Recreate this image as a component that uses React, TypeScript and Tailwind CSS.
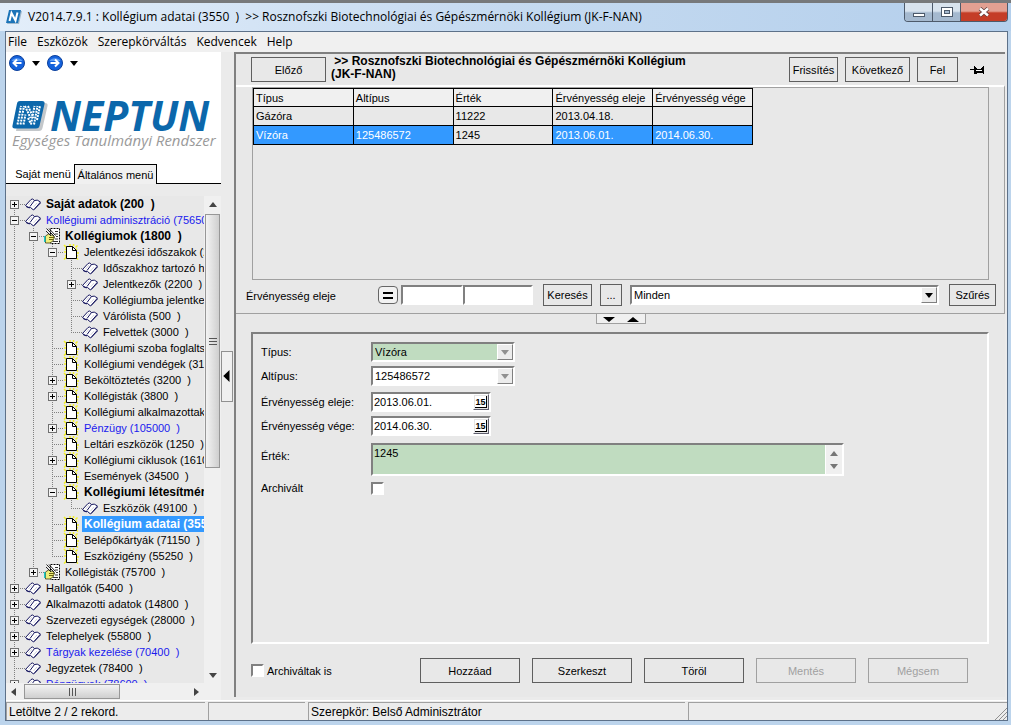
import React, { useState } from 'react';
import clsx from 'clsx';

type IconKind = 'book' | 'page' | 'hand';

interface TreeItem {
  level: number;
  label: string;
  icon: IconKind;
  box?: '+' | '-';
  tone?: 'bold' | 'blue';
}

const TREE: TreeItem[] = [
  { level: 0, label: 'Saját adatok (200  )', icon: 'book', box: '+', tone: 'bold' },
  { level: 0, label: 'Kollégiumi adminisztráció (75650', icon: 'book', box: '-', tone: 'blue' },
  { level: 1, label: 'Kollégiumok (1800  )', icon: 'hand', box: '-', tone: 'bold' },
  { level: 2, label: 'Jelentkezési időszakok (2', icon: 'page', box: '-' },
  { level: 3, label: 'Időszakhoz tartozó ha', icon: 'book' },
  { level: 3, label: 'Jelentkezők (2200  )', icon: 'book', box: '+' },
  { level: 3, label: 'Kollégiumba jelentkez', icon: 'book' },
  { level: 3, label: 'Várólista (500  )', icon: 'book' },
  { level: 3, label: 'Felvettek (3000  )', icon: 'book' },
  { level: 2, label: 'Kollégiumi szoba foglaltsá', icon: 'page' },
  { level: 2, label: 'Kollégiumi vendégek (315', icon: 'page' },
  { level: 2, label: 'Beköltöztetés (3200  )', icon: 'page', box: '+' },
  { level: 2, label: 'Kollégisták (3800  )', icon: 'page', box: '+' },
  { level: 2, label: 'Kollégiumi alkalmazottak (', icon: 'page' },
  { level: 2, label: 'Pénzügy (105000  )', icon: 'page', box: '+', tone: 'blue' },
  { level: 2, label: 'Leltári eszközök (1250  )', icon: 'page' },
  { level: 2, label: 'Kollégiumi ciklusok (1610', icon: 'page', box: '+' },
  { level: 2, label: 'Események (34500  )', icon: 'page' },
  { level: 2, label: 'Kollégiumi létesítmén', icon: 'page', box: '-', tone: 'bold' },
  { level: 3, label: 'Eszközök (49100  )', icon: 'book' },
  { level: 2, label: 'Kollégium adatai (355', icon: 'page', tone: 'bold' },
  { level: 2, label: 'Belépőkártyák (71150  )', icon: 'page' },
  { level: 2, label: 'Eszközigény (55250  )', icon: 'page' },
  { level: 1, label: 'Kollégisták (75700  )', icon: 'hand', box: '+' },
  { level: 0, label: 'Hallgatók (5400  )', icon: 'book', box: '+' },
  { level: 0, label: 'Alkalmazotti adatok (14800  )', icon: 'book', box: '+' },
  { level: 0, label: 'Szervezeti egységek (28000  )', icon: 'book', box: '+' },
  { level: 0, label: 'Telephelyek (55800  )', icon: 'book', box: '+' },
  { level: 0, label: 'Tárgyak kezelése (70400  )', icon: 'book', box: '+', tone: 'blue' },
  { level: 0, label: 'Jegyzetek (78400  )', icon: 'book' },
  { level: 0, label: 'Pénzügyek (78600  )', icon: 'book', box: '+', tone: 'blue' },
];

const COLUMNS = ['Típus', 'Altípus', 'Érték', 'Érvényesség eleje', 'Érvényesség vége'];
const RECORDS = [
  ['Gázóra', '', '11222', '2013.04.18.', ''],
  ['Vízóra', '125486572', '1245', '2013.06.01.', '2014.06.30.'],
];

const SUNKEN = 'border-2 border-t-[#808080] border-l-[#808080] border-b-white border-r-white';
const BUTTON = 'border border-[#5f5f5f] bg-[#e8e8e8] text-center text-[11px] leading-4 disabled:border-[#a0a0a0] disabled:text-[#a0a0a0]';

// true when a later row continues the vertical guide of the given level
const continues = (index: number, level: number) => {
  for (let i = index + 1; i < TREE.length; i++) {
    if (TREE[i].level < level) return false;
    if (TREE[i].level === level) return true;
  }
  return level === 0;
};

const Triangle: React.FC<{ dir: 'up' | 'down' | 'left' | 'right'; className?: string }> = ({ dir, className }) => {
  const points = {
    up: '0,7 4,2 8,7',
    down: '0,2 8,2 4,7',
    left: '6,0 6,8 1,4',
    right: '2,0 2,8 7,4',
  }[dir];
  return (
    <svg viewBox="0 0 8 8" preserveAspectRatio="none" className={clsx('block fill-current', className)} aria-hidden="true">
      <polygon points={points} />
    </svg>
  );
};

const TreeIcon: React.FC<{ kind: IconKind }> = ({ kind }) => {
  if (kind === 'book') {
    return (
      <svg viewBox="0 0 16 16" className="h-4 w-4 shrink-0" aria-hidden="true">
        <path d="M.5 9.500 6 3.500Q7.500 2 9.500 4.500Q12 3 15.500 6L10 12.500 8.500 14 5.500 11.500Q3 12 .5 9.500Z" fill="#fff" stroke="#14145e" />
        <path d="M9.500 4.500 5 10.500M15.500 7 9 13.500M1 10.500l3.500 1.500" fill="none" stroke="#14145e" />
        <path d="M3.500 9 7 5M8.500 11 12 7" stroke="#c9c9d6" strokeWidth=".8" />
      </svg>
    );
  }
  if (kind === 'page') {
    return (
      <svg viewBox="0 0 16 16" className="h-4 w-4 shrink-0" aria-hidden="true">
        <path d="m1 1 3 3M14.500 1.500l-2 2M1 15.500l3-3M15 15.500l-3-3M7 0v3M1 8h3M12 9h4M2 5l2 1M2 12l2-1M14 5l-2 1M15 12l-3-1M10.500 0v2" stroke="#f3f025" strokeWidth="1.500" />
        <path d="M3.500 2.500h6l4 4v8h-10z" fill="#fff" stroke="#000" />
        <path d="M9.500 2.500v4h4" fill="none" stroke="#000" />
      </svg>
    );
  }
  return (
    <svg viewBox="0 0 16 16" className="h-4 w-4 shrink-0" aria-hidden="true">
      <path d="M6.500.5h9v15h-9z" fill="#fff" stroke="#000" strokeDasharray="2 1" />
      <path d="M11 3.500h3M11 6h3M12 8.500h2M11 11h3M9 13.500h5" stroke="#333" />
      <path d="M1.500 8 4.500 6l4 1.500 2 1.500-1.500 4-3 2h-4.500z" fill="#f0ee7a" stroke="#3a3a10" strokeWidth=".8" />
      <path d="M5 9.500h5M5 11.500h4" stroke="#6b6410" />
      <path d="M0 8h1.500v6H0z" fill="#19c8c8" />
      <path d="m2.500.5 8 8M5 .5l6.500 7M2 3l5 5" stroke="#222" />
    </svg>
  );
};

const TreeRow: React.FC<{ item: TreeItem; index: number; selected: boolean; onSelect: () => void }> = ({
  item,
  index,
  selected,
  onSelect,
}) => (
  <li className="flex h-4 items-center">
    {Array.from({ length: item.level }, (_, level) => (
      <svg key={level} width="19" height="16" className="shrink-0" shapeRendering="crispEdges" aria-hidden="true">
        {continues(index, level) && <path d="M8.500 0v16" stroke="#808080" strokeDasharray="1 1" />}
      </svg>
    ))}
    <svg width="19" height="16" className="shrink-0" shapeRendering="crispEdges" aria-hidden="true">
      {index > 0 && <path d="M8.500 0v8" stroke="#808080" strokeDasharray="1 1" />}
      {continues(index, item.level) && <path d="M8.500 8v8" stroke="#808080" strokeDasharray="1 1" />}
      <path d="M8 8.500h11" stroke="#808080" strokeDasharray="1 1" />
      {item.box && (
        <>
          <rect x="4.500" y="4.500" width="8" height="8" fill="#f4f4f4" stroke="#707070" />
          <path d={item.box === '+' ? 'M6 8.500h5M8.500 6v5' : 'M6 8.500h5'} stroke="#000" />
        </>
      )}
    </svg>
    <TreeIcon kind={item.icon} />
    <button
      type="button"
      onClick={onSelect}
      className={clsx(
        'ml-[3px] h-4 whitespace-pre px-0.5 text-left leading-4',
        item.tone === 'bold' ? 'text-[12px] font-bold' : 'text-[11px]',
        selected ? 'bg-[#3399ff] text-white' : item.tone === 'blue' ? 'text-[#1a1aee]' : 'text-black'
      )}
    >
      {item.label}
    </button>
  </li>
);

const NeptunMark: React.FC<{ className?: string }> = ({ className }) => (
  <svg viewBox="0 0 36 31" className={className} aria-hidden="true">
    <path d="M9 3h24c2 0 3 1 2.500 3l-5 22c-.5 2-1.500 3-3.500 3H4z" fill="#c3c7ca" />
    <path d="M8 1h22c2 0 3 1 2.500 3l-5 22c-.5 1.700-1.500 2.500-3.500 2.500H3C1 28.500 0 27.500.500 25.500l4.500-22C5.500 1.700 6.500 1 8 1z" fill="#0b67ab" />
    <path
      d="M5.500 24.500 9 6M8.500 24.500 12 6M11.500 24.500l2-10M13 6l5.500 12M16 6l5.500 12M16 18l3 6M19 24.500 22.500 6M22 24.500 25.500 6M25 20l3-14"
      stroke="#fff"
      strokeWidth="2"
      strokeDasharray="2 1"
      fill="none"
    />
  </svg>
);

const TitleIcon: React.FC = () => (
  <svg viewBox="0 0 16 14" className="h-3.5 w-4" aria-hidden="true">
    <path d="M4 1h12l-3 13H1z" fill="#9fb8cc" />
    <path d="M3 0h12l-3 13H0z" fill="#1c74b8" />
    <path d="M3.500 11 5.500 3l4 7.500L11.500 2.500" fill="none" stroke="#fff" strokeWidth="2" />
  </svg>
);

const NavArrow: React.FC<{ dir: 'back' | 'forward' }> = ({ dir }) => (
  <svg viewBox="0 0 16 16" className={clsx('h-4 w-4', dir === 'forward' && '-scale-x-100')} aria-hidden="true">
    <circle cx="8" cy="8" r="7.500" fill="#1462dc" stroke="#0b3f9c" />
    <path d="M2.500 6a6 4.500 0 0 1 11 0z" fill="#5d9df5" />
    <path d="M12.500 8H4.500M8 4.500 4.500 8 8 11.500" fill="none" stroke="#fff" strokeWidth="2" />
  </svg>
);

const TitleBar: React.FC = () => (
  <header className="flex h-7 shrink-0 items-start bg-linear-to-r from-[#e3eefa] via-[#c5daf0] to-[#b4cfec]">
    <div className="flex h-7 flex-1 items-center gap-1.5 pl-1.5">
      <TitleIcon />
      <h1 className="whitespace-pre font-['Open_Sans','Noto_Sans',sans-serif] text-[12px] leading-4">
        V2014.7.9.1 : Kollégium adatai (3550  )  &gt;&gt; Rosznofszki Biotechnológiai és Gépészmérnöki Kollégium (JK-F-NAN)
      </h1>
    </div>
    <div className="mr-[3px] flex h-[19px] overflow-hidden rounded-b border border-t-0 border-[#4d5a6b]">
      <button type="button" aria-label="Kis méret" className="flex w-7 items-end justify-center border-r border-[#4d5a6b] bg-linear-to-b from-[#d8e3ee] from-45% to-[#a5b9cf] to-55% pb-1">
        <span className="h-1 w-3 border border-[#4d5a6b] bg-white" />
      </button>
      <button type="button" aria-label="Előző méret" className="flex w-7 items-center justify-center border-r border-[#4d5a6b] bg-linear-to-b from-[#d8e3ee] from-45% to-[#a5b9cf] to-55%">
        <svg width="12" height="10" shapeRendering="crispEdges" aria-hidden="true">
          <rect x=".5" y=".5" width="11" height="9" fill="#fff" stroke="#4d5a6b" />
          <rect x="3.500" y="3.500" width="5" height="3" fill="#a5b9cf" stroke="#4d5a6b" />
        </svg>
      </button>
      <button type="button" aria-label="Bezárás" className="flex w-[46px] items-center justify-center bg-linear-to-b from-[#e3a092] from-45% to-[#c43d27] to-55%">
        <svg width="12" height="10" aria-hidden="true">
          <path d="m2 1.500 8 7m0-7-8 7" stroke="#5a3a3a" strokeWidth="4" />
          <path d="m2 1.500 8 7m0-7-8 7" stroke="#fff" strokeWidth="2.500" />
        </svg>
      </button>
    </div>
  </header>
);

const Sidebar: React.FC = () => {
  const [selected, setSelected] = useState(20);

  return (
    <aside className="flex w-[215px] shrink-0 flex-col">
      <div className="bg-white">
        <div className="flex h-[21px] items-center pl-[3px]">
          <button type="button" aria-label="Vissza"><NavArrow dir="back" /></button>
          <button type="button" aria-label="Vissza előzmények" className="px-[7px]"><Triangle dir="down" className="h-2 w-2" /></button>
          <button type="button" aria-label="Előre"><NavArrow dir="forward" /></button>
          <button type="button" aria-label="Előre előzmények" className="px-[7px]"><Triangle dir="down" className="h-2 w-2" /></button>
        </div>
        <div className="pt-[26px] pl-1.5 font-['Open_Sans','Noto_Sans',sans-serif]">
          <div className="flex h-8 items-center gap-0.5">
            <NeptunMark className="h-[31px] w-9 shrink-0" />
            <span className="text-[41px] leading-8 font-bold text-[#0b67ab] italic">NEPTUN</span>
          </div>
          <p className="mt-px whitespace-nowrap text-[15px] leading-4 text-[#9a9a9a] italic">Egységes Tanulmányi Rendszer</p>
        </div>
        <div role="tablist" className="mt-4 flex h-5 items-stretch text-[11px] leading-4">
          <button type="button" role="tab" aria-selected="false" className="w-[68px] border-b border-black pl-1.5 whitespace-nowrap">Saját menü</button>
          <button type="button" role="tab" aria-selected="true" className="w-[83px] border border-b-0 border-black bg-[#f0f0f0] whitespace-nowrap">Általános menü</button>
          <span className="flex-1 border-b border-black" />
        </div>
      </div>

      <div className="flex min-h-0 flex-1 pt-3">
        <ul className="min-w-0 flex-1 overflow-hidden bg-[#e8e8e8]">
          {TREE.map((item, index) => (
            <TreeRow key={item.label} item={item} index={index} selected={index === selected} onSelect={() => setSelected(index)} />
          ))}
        </ul>
        <div className="flex w-[17px] flex-col items-center bg-[#f0f0f0] text-[#444]">
          <Triangle dir="up" className="mt-1 mb-1.5 h-2 w-2" />
          <div className="flex h-[254px] w-[15px] flex-col items-center justify-center gap-0.5 border border-[#979797] bg-linear-to-r from-[#f3f3f3] to-[#cfcfcf]">
            <span className="h-px w-2 bg-[#555]" />
            <span className="h-px w-2 bg-[#555]" />
            <span className="h-px w-2 bg-[#555]" />
          </div>
          <Triangle dir="down" className="mt-auto mb-1 h-2 w-2" />
        </div>
      </div>
      <div className="flex h-[17px] items-center bg-[#f0f0f0] pr-[21px] pl-1 text-[#444]">
        <Triangle dir="left" className="h-2 w-2" />
        <div className="ml-1.5 flex h-[15px] w-24 items-center justify-center gap-0.5 border border-[#979797] bg-linear-to-b from-[#f3f3f3] to-[#cfcfcf]">
          <span className="h-2 w-px bg-[#555]" />
          <span className="h-2 w-px bg-[#555]" />
          <span className="h-2 w-px bg-[#555]" />
        </div>
        <Triangle dir="right" className="ml-auto h-2 w-2" />
      </div>
    </aside>
  );
};

interface ComboProps {
  id: string;
  label?: string;
  value: string;
  className?: string;
  fill?: string;
  arrow?: string;
}

const Combo: React.FC<ComboProps> = ({ id, label, value, className, fill = 'bg-white', arrow = 'text-black' }) => (
  <div className={clsx('relative h-5', SUNKEN, className)}>
    <select id={id} aria-label={label} defaultValue={value} className={clsx('block h-4 w-full appearance-none rounded-none pl-0.5 text-[11px] leading-4', fill)}>
      <option>{value}</option>
    </select>
    <span className={clsx('pointer-events-none absolute top-0 right-0 flex h-4 w-4 items-center justify-center border border-white border-r-[#808080] border-b-[#808080] bg-[#ececec]', arrow)}>
      <Triangle dir="down" className="h-2 w-2" />
    </span>
  </div>
);

const DateField: React.FC<{ id: string; value: string }> = ({ id, value }) => (
  <div className={clsx('flex h-5 w-[120px] bg-white', SUNKEN)}>
    <input id={id} defaultValue={value} className="h-4 min-w-0 flex-1 pl-px text-[11px] leading-4" />
    <button type="button" aria-label="Naptár" className="flex h-4 w-4 items-center justify-center border border-white border-r-[#606070] border-b-[#606070] bg-[#e4e4e4]">
      <span className="h-3 w-3 border-r border-b border-black bg-white text-center text-[9px] leading-3 font-bold">15</span>
    </button>
  </div>
);

const RecordPanel: React.FC = () => (
  <section className="border-t-2 border-r border-b border-t-white border-r-[#a0a0a0] border-b-[#a0a0a0] pb-[7px]">
    <div className="mr-[15px] ml-4 h-[193px] border border-[#a0a0a0]">
      <table className="w-[500px] table-fixed border-collapse text-left text-[11px] leading-4">
        <thead>
          <tr className="h-[18px]">
            {COLUMNS.map(col => (
              <th key={col} scope="col" className="border border-black bg-[#f0f0f0] px-0.5 py-0 font-normal whitespace-nowrap">{col}</th>
            ))}
          </tr>
        </thead>
        <tbody>
          {RECORDS.map((cells, row) => (
            <tr key={cells[0]} className="h-[19px]">
              {cells.map((cell, col) => (
                <td key={COLUMNS[col]} className={clsx('border border-black px-0.5 py-0', row === 1 && col !== 2 && 'bg-[#3399ff] text-white')}>{cell}</td>
              ))}
            </tr>
          ))}
        </tbody>
      </table>
    </div>

    <div className="mt-1 mr-2 ml-2.5 flex items-center text-[11px] leading-4">
      <label htmlFor="filter-from" className="w-[132px] pt-0.5">Érvényesség eleje</label>
      <button type="button" aria-label="Egyenlő" className="flex h-[18px] w-5 flex-col items-center justify-center gap-[3px] rounded-sm border border-[#666] bg-[#f2f2f2]">
        <span className="h-0.5 w-2.5 bg-black" />
        <span className="h-0.5 w-2.5 bg-black" />
      </button>
      <input id="filter-from" className={clsx('ml-[3px] h-5 w-[62px] bg-white', SUNKEN)} />
      <input aria-label="Érvényesség eleje, felső határ" className={clsx('h-5 w-[70px] bg-white', SUNKEN)} />
      <button type="button" className={clsx('ml-2.5 h-[22px] w-[49px]', BUTTON)}>Keresés</button>
      <button type="button" aria-label="Továbbiak" className={clsx('ml-2 h-[22px] w-[22px]', BUTTON)}>...</button>
      <Combo id="filter" label="Szűrő" value="Minden" className="ml-2 flex-1" />
      <button type="button" className={clsx('ml-2.5 h-[22px] w-[47px]', BUTTON)}>Szűrés</button>
    </div>
  </section>
);

const DetailForm: React.FC = () => (
  <form className="mr-4 ml-[15px] min-h-0 flex-1 border-2 border-t-[#808080] border-r-white border-b-white border-l-[#808080] text-[11px] leading-4">
    <div className="mt-2 ml-2 grid grid-cols-[110px_1fr] items-center">
      <label htmlFor="type">Típus:</label>
      <Combo id="type" value="Vízóra" className="w-36" fill="bg-[#c0dcc0]" arrow="text-[#909090]" />
      <label htmlFor="subtype" className="mt-1">Altípus:</label>
      <Combo id="subtype" value="125486572" className="mt-1 w-36" arrow="text-[#909090]" />
      <label htmlFor="valid-from" className="mt-1.5">Érvényesség eleje:</label>
      <div className="mt-1.5"><DateField id="valid-from" value="2013.06.01." /></div>
      <label htmlFor="valid-to" className="mt-1">Érvényesség vége:</label>
      <div className="mt-1"><DateField id="valid-to" value="2014.06.30." /></div>
      <label htmlFor="value">Érték:</label>
      <div className={clsx('mt-[7px] flex h-[33px] w-[473px] bg-[#f0f0f0]', SUNKEN)}>
        <textarea id="value" defaultValue="1245" className="h-full flex-1 resize-none overflow-hidden bg-[#c0dcc0] pl-px text-[11px] leading-4" />
        <div className="flex w-[17px] flex-col items-center justify-between border-l border-white py-1 text-[#777]">
          <Triangle dir="up" className="h-2 w-2" />
          <Triangle dir="down" className="h-2 w-2" />
        </div>
      </div>
      <label htmlFor="archived" className="mt-1">Archivált</label>
      <input id="archived" type="checkbox" className={clsx('mt-1 h-[13px] w-[13px] appearance-none bg-white', SUNKEN)} />
    </div>
  </form>
);

const STATUS = 'border-t border-l border-[#a0a0a0] whitespace-nowrap pl-0.5 text-[12px] leading-[18px]';

export default function App() {
  return (
    <div className="flex h-screen flex-col bg-[#bcd4ec] font-['Liberation_Sans',Arial,sans-serif] text-black">
      <div className="h-[3px] shrink-0 bg-[#77797b]" />
      <TitleBar />

      <div className="mr-[3px] mb-1 ml-[5px] flex min-h-0 flex-1 flex-col border border-[#5d7189] bg-[#ebebeb]">
        <nav className="flex h-5 shrink-0 items-center gap-2.5 bg-[#f0f0f0] pl-0.5 font-['Open_Sans','Noto_Sans',sans-serif] text-[12px] leading-4">
          <button type="button">File</button>
          <button type="button">Eszközök</button>
          <button type="button">Szerepkörváltás</button>
          <button type="button">Kedvencek</button>
          <button type="button">Help</button>
        </nav>

        <div className="flex min-h-0 flex-1">
          <Sidebar />

          <div className="flex w-[13px] shrink-0 items-center">
            <button type="button" aria-label="Menü elrejtése" className="flex h-[51px] w-3 items-center justify-center border border-[#909090] bg-[#f0f0f0]">
              <Triangle dir="left" className="h-3 w-2.5" />
            </button>
          </div>

          <main className="mr-0.5 mb-[3px] flex min-w-0 flex-1 flex-col border-t-2 border-l-2 border-[#808080] bg-[#e8e8e8]">
            <div className="flex h-[31px] shrink-0 items-start pt-[3px] pr-5 pl-[15px]">
              <button type="button" className={clsx('h-[25px] w-[75px]', BUTTON)}>Előző</button>
              <h2 className="-mt-0.5 ml-[5px] min-w-0 flex-1 text-[12px] leading-[13px] font-bold">
                <span className="whitespace-pre"> &gt;&gt; Rosznofszki Biotechnológiai és Gépészmérnöki Kollégium</span>
                <br />
                (JK-F-NAN)
              </h2>
              <button type="button" className={clsx('h-[25px] w-[49px]', BUTTON)}>Frissítés</button>
              <button type="button" className={clsx('ml-[7px] h-[25px] w-[65px]', BUTTON)}>Következő</button>
              <button type="button" className={clsx('ml-[7px] h-[25px] w-[41px]', BUTTON)}>Fel</button>
              <button type="button" aria-label="Rögzítés" className="mt-2 ml-3">
                <svg width="15" height="10" shapeRendering="crispEdges" aria-hidden="true">
                  <path d="M0 4h5v1H0zM4 1h1v8H4zM5 2h1v1h1v1h4V3h1V2h1V1h1v8h-1V8H7v1H5z" fill="#000" />
                  <path d="M6 5h6v1H6z" fill="#fff" />
                </svg>
              </button>
            </div>

            <RecordPanel />

            <div className="flex h-[18px] shrink-0 justify-center">
              <div className="flex h-2.5 w-[50px] items-center justify-between border border-t-0 border-[#a0a0a0] bg-[#f0f0f0] px-1.5">
                <button type="button" aria-label="Lejjebb"><Triangle dir="down" className="h-2 w-3" /></button>
                <button type="button" aria-label="Feljebb"><Triangle dir="up" className="h-2 w-3" /></button>
              </div>
            </div>

            <DetailForm />

            <div className="flex h-[53px] shrink-0 items-center gap-3 pr-[37px] pl-[15px] text-[11px] leading-4">
              <label className="mr-auto flex items-center gap-[3px]">
                <input type="checkbox" className={clsx('h-[13px] w-[13px] appearance-none bg-white', SUNKEN)} />
                Archiváltak is
              </label>
              <button type="button" className={clsx('h-[25px] w-[100px]', BUTTON)}>Hozzáad</button>
              <button type="button" className={clsx('h-[25px] w-[100px]', BUTTON)}>Szerkeszt</button>
              <button type="button" className={clsx('h-[25px] w-[100px]', BUTTON)}>Töröl</button>
              <button type="button" disabled className={clsx('h-[25px] w-[100px]', BUTTON)}>Mentés</button>
              <button type="button" disabled className={clsx('h-[25px] w-[100px]', BUTTON)}>Mégsem</button>
            </div>
          </main>
        </div>

        <footer className="flex h-5 shrink-0 gap-[3px] border-t border-white bg-[#ececec] pt-px">
          <span className={clsx('w-[199px]', STATUS)}>Letöltve 2 / 2 rekord.</span>
          <span className={clsx('w-[97px]', STATUS)} />
          <span className={clsx('w-[377px]', STATUS)}>Szerepkör: Belső Adminisztrátor</span>
          <span className={clsx('flex flex-1 items-end justify-end', STATUS)}>
            <svg width="12" height="12" aria-hidden="true">
              <path d="M0 12 12 0M4 12l8-8M8 12l4-4" stroke="#909090" />
            </svg>
          </span>
        </footer>
      </div>
    </div>
  );
}
